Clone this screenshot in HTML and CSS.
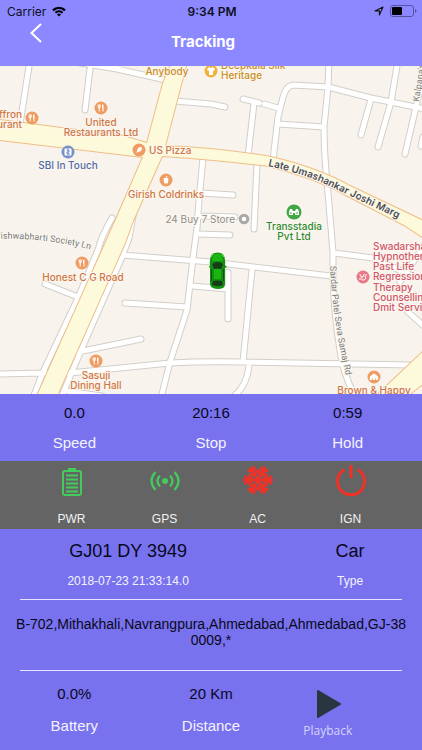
FILE: index.html
```html
<!DOCTYPE html>
<html lang="en">
<head>
<meta charset="utf-8">
<meta name="viewport" content="width=device-width, initial-scale=1">
<title>Tracking</title>
<link rel="stylesheet" href="styles.css">
</head>
<body>
<div class="app">
  <header class="header">
    <div class="status">
      <div class="status-left">
        <span>Carrier</span>
        <svg class="wifi" viewBox="0 0 14 11" width="14" height="11" aria-hidden="true">
          <path d="M0.2 3.6a9.6 9.6 0 0 1 13.6 0L12.2 5.200a7.400 7.400 0 0 0-10.400 0zM2.700 6.100a6.100 6.100 0 0 1 8.600 0L9.800 7.600a4 4 0 0 0-5.600 0zM5 8.400a2.800 2.800 0 0 1 4 0L7 10.400z"/>
        </svg>
      </div>
      <span class="clock">9:34 PM</span>
      <div class="status-right">
        <svg viewBox="0 0 10 10" width="10" height="10" aria-hidden="true"><path d="M1 5 9 1 5.400 9V4.900z" fill="none" stroke="#111" stroke-width="1.100" stroke-linejoin="round"/></svg>
        <svg viewBox="0 0 27 12" width="27" height="12" aria-hidden="true"><rect x=".5" y=".5" width="23" height="11" rx="2.500" fill="none" stroke="#5652a0"/><rect x="2" y="2" width="10" height="8" rx="1"/><path d="M25 4v4q1.500-.7 1.500-2T25 4z" fill="#5652a0"/></svg>
      </div>
    </div>
    <nav class="nav">
      <button class="back" type="button" aria-label="Back">
        <svg viewBox="0 0 12 20" width="12" height="20"><path d="M11 1 1.500 10 11 19" fill="none" stroke="#fff" stroke-width="2"/></svg>
      </button>
      <h1 class="title">Tracking</h1>
    </nav>
  </header>

  <main class="map">
    <svg class="map-canvas" viewBox="0 66 422 328" preserveAspectRatio="xMidYMid slice" role="img" aria-label="Map">
      <defs>
        <g id="roads">
          <path d="M30 60 20 124M74 62 117 69 166 80M90 69 85 110M117 60V69M175 101 211 104 225 107M203 158 199 200 197 228 193 258 187 310 170 362 161 398M202 193 233 195M200 216 235 217"/>
          <path d="M329 60 328 87 324 127Q324 155 328 193L333 252V275Q334 315 340 350 343 374 355 396M273 160 278 117 283 97Q286 86 293 85L328 87 371 98 425 109M243 99 259 103M264 104 278 108M254 103 248 156M278 124 324 127M371 99 361 135M398 60 391 102 378 147M424 72 416 107 405 154M423 137 421 146M257 164 254 229"/>
          <path d="M198 234 230 235M122 255 211 262 331 276M45 284 78 297M112 218Q101 237 98 250L78 298 43 372 33 398M133 216 129 238 122 257 82 348 61 398M125 303 187 307M78 352 141 339M-3 374 43 373 70 373 170 363Q205 361 244 362L411 365M192 286 228 289M228 272V319M252 270 243 362M249 365Q247 386 234 396M334 253 373 258 410 275M400 282 425 244M408 312 425 327M67 391 102 396"/>
        </g>
        <g id="fork">
          <circle r="6.500" fill="#ef9c62"/>
          <path d="M-2.800-3.500V-1q0 1 1 1V3.500M-.8-3.500V-1q0 1-1 1V-3.500M2-3.500V3.500M1.500-3V.5" fill="none" stroke="#fff" stroke-width="1"/>
        </g>
        <path id="marg" d="M268 166Q304 174 325 184T412 225"/>
        <path id="samaj" d="M330 266Q333 326 348 384"/>
        <path id="society" d="M-5 239Q48 237 100 252"/>
        <path id="kalpana" d="M419 102 427 50"/>
      </defs>
      <rect x="-400" y="-400" width="1400" height="1400" fill="#f8f4ed"/>
      <use href="#roads" class="casing"/>
      <use href="#roads" class="road"/>
      <g class="highway">
        <path class="edge" d="M0 120 123 136Q137 140 147 143M0 140 143 157M172 62 163 83 147 143M143 157 117 217 36 398M187 62 165 146Q218 148 271 157 318 168 350 186L430 224M162 156Q222 160 268 166 315 178 342 193L404 225 430 242M162 156 133 221 125 243 58 393M430 345 378 394M410 394 430 378"/>
        <path d="M0 120 123 136Q137 140 147 143L143 157 0 140zM172 62H187L165 146Q218 148 271 157 318 168 350 186L430 224V242L404 225 342 193Q315 178 268 166 222 160 162 156L133 221 125 243 56 398H36L117 217 143 157 147 143 163 83zM430 345 374 398H405L430 378z"/>
      </g>

      <g class="markers">
        <use href="#fork" x="32" y="118"/>
        <use href="#fork" x="101" y="108"/>
        <use href="#fork" x="82" y="263"/>
        <use href="#fork" x="96" y="361"/>
        <g transform="translate(139 150)"><circle r="6.500" fill="#ef9c62"/><path d="M-3.500 3.500-1.500-2Q0-4 3-3.500 4 0 2 1.500zM-1 1h.1M1-1h.1" fill="#fff" stroke="#ef9c62"/></g>
        <g transform="translate(166 180)"><circle r="6.500" fill="#ef9c62"/><path d="M-2-1.500h4L1.500 3h-3z" fill="#fff" stroke="#fff"/><path d="M0-2 1-4" stroke="#fff"/></g>
        <g transform="translate(68 152)"><circle r="6.500" fill="#7590ca"/><rect x="-3.500" y="-3.500" width="7" height="7" rx="1" fill="#fff"/><path d="M-1.500-2H1V0H-1V2H2M0-3V3" fill="none" stroke="#7590ca"/></g>
        <g transform="translate(211 71)"><circle r="6.500" fill="#efb23b"/><path d="M-4-2-1.500-4Q0-2 1.500-4L4-2 3 0 2-.5V4H-2V-.5L-3 0z" fill="#fff"/></g>
        <g transform="translate(294 212)"><circle r="7.500" fill="#3fa744"/><path d="M-5 0-4-3h2l1 2h2L2-3h2L5 0V3H1V1H-1V3H-5z" fill="#fff"/><path d="M-4 1h2M2 1h2" stroke="#3fa744"/></g>
        <g transform="translate(363 277)"><circle r="6.500" fill="#e87886"/><path d="M-3-3Q-3 0-1 0T1-3M-1 0Q-2 4 1 3T2-1M-4 2H-2M3-3v2" fill="none" stroke="#fff"/></g>
        <g transform="translate(374 377)"><circle r="6.500" fill="#ef9c62"/><path d="M-4 3Q-5-1-2-2 0-5 2-2 5-1 4 3H2L1 0V3H-1V0L-2 3z" fill="#fff"/></g>
        <circle cx="244" cy="219" r="3.800" fill="#fff" stroke="#aaa8a5" stroke-width="3"/>
      </g>

      <g class="labels food">
        <text x="22" y="118" class="end">Saffron</text><text x="22" y="128" class="end">Restaurant</text>
        <text x="101" y="126">United</text><text x="101" y="136">Restaurants Ltd</text>
        <text x="149" y="154" class="start">US Pizza</text>
        <text x="166" y="198">Girish Coldrinks</text>
        <text x="83" y="281">Honest C G Road</text>
        <text x="96" y="379">Sasuji</text><text x="96" y="389">Dining Hall</text>
        <text x="374" y="394">Brown &amp; Happy</text>
      </g>
      <g class="labels shop"><text x="167" y="75">Anybody</text><text x="221" y="69" class="start">Deepkala Silk</text><text x="221" y="79" class="start">Heritage</text></g>
      <g class="labels bank"><text x="68" y="169">SBI In Touch</text></g>
      <g class="labels park"><text x="294" y="230">Transstadia</text><text x="294" y="240">Pvt Ltd</text></g>
      <g class="labels store"><text x="235" y="223" class="end">24 Buy 7 Store</text></g>
      <g class="labels health">
        <text x="373" y="250" class="start">Swadarshan</text><text x="373" y="260" class="start">Hypnotherapy</text><text x="373" y="270" class="start">Past Life</text><text x="373" y="280" class="start">Regression</text><text x="373" y="291" class="start">Therapy</text><text x="373" y="301" class="start">Counselling</text><text x="373" y="311" class="start">Dmit Services</text>
      </g>
      <g class="labels street">
        <text class="start major"><textPath href="#marg">Late Umashankar Joshi Marg</textPath></text>
        <text class="start"><textPath href="#samaj">Sardar Patel Seva Samaj Rd</textPath></text>
        <text class="start"><textPath href="#society">Vishwabharti Society Ln</textPath></text>
        <text class="start"><textPath href="#kalpana">Kalpana's</textPath></text>
      </g>

      <g transform="translate(209 252)">
        <path d="M3 2Q9-1 14 2 17 6 16 13L18 15 16 16V31Q16 35 14 36 9 38 4 36 1 35 1 31V16L0 15 1 13Q0 6 3 2z" fill="#129010"/>
        <path d="M4 3Q9 0 13 3L14 9H3zM5 17H12V27H5z" fill="#1cb412"/>
        <path d="M3 12Q9 8 14 12L12 17Q9 16 5 17zM4 29Q9 28 13 29L14 33Q9 35 3 33z" fill="#173c18"/>
        <path d="M2.500 17V29M14.500 17V29" stroke="#17501a"/>
        <path d="M2 5 4 2M15 5 13 2" stroke="#8ae172"/>
      </g>
    </svg>
  </main>

  <section class="stats columns">
    <div class="stat"><span class="value">0.0</span><span class="label">Speed</span></div>
    <div class="stat"><span class="value">20:16</span><span class="label">Stop</span></div>
    <div class="stat"><span class="value">0:59</span><span class="label">Hold</span></div>
  </section>

  <section class="sensors">
    <div class="sensor on">
      <svg viewBox="0 0 30 30" width="30" height="30" aria-hidden="true"><path d="M8 4h14q2 0 2 2V26q0 2-2 2H8q-2 0-2-2V6q0-2 2-2z" fill="none" stroke="currentColor" stroke-width="2"/><path d="M11 1h8v3h-8z" fill="currentColor"/><path d="M9 8.500h12M9 12.500h12M9 16.500h12M9 20.500h12M9 24.500h12" stroke="currentColor" stroke-width="2"/></svg>
      <span>PWR</span>
    </div>
    <div class="sensor on">
      <svg viewBox="0 0 30 30" width="30" height="30" aria-hidden="true"><circle cx="15" cy="14" r="3" fill="currentColor"/><path d="M10 8.500q-5 5.500 0 11M20 8.500q5 5.500 0 11M5.500 5q-8 9 0 18M24.500 5q8 9 0 18" fill="none" stroke="currentColor" stroke-width="2.200"/></svg>
      <span>GPS</span>
    </div>
    <div class="sensor off">
      <svg viewBox="0 0 30 30" width="30" height="30" aria-hidden="true">
        <defs><path id="arm" d="M15 13V-2M11 -.5 15 3.500 19 -.5M10.500 3.500 15 8 19.500 3.500" fill="none" stroke="currentColor" stroke-width="2.500"/></defs>
        <g transform="rotate(30 15 13)"><use href="#arm"/><use href="#arm" transform="rotate(60 15 13)"/><use href="#arm" transform="rotate(120 15 13)"/><use href="#arm" transform="rotate(180 15 13)"/><use href="#arm" transform="rotate(240 15 13)"/><use href="#arm" transform="rotate(300 15 13)"/></g>
      </svg>
      <span>AC</span>
    </div>
    <div class="sensor off power">
      <svg viewBox="0 0 30 30" width="30" height="30" aria-hidden="true"><path d="M8.500 2.500a13.500 13.500 0 1 0 13 0M15-2V11" fill="none" stroke="currentColor" stroke-width="3"/></svg>
      <span>IGN</span>
    </div>
  </section>

  <section class="details">
    <div class="vehicle">
      <div class="stat"><span class="plate">GJ01 DY 3949</span><span class="small">2018-07-23 21:33:14.0</span></div>
      <div class="stat"><span class="plate">Car</span><span class="small">Type</span></div>
    </div>
    <p class="address">B-702,Mithakhali,Navrangpura,Ahmedabad,Ahmedabad,GJ-380009,*</p>
    <div class="columns summary">
      <div class="stat"><span class="value">0.0%</span><span class="label">Battery</span></div>
      <div class="stat"><span class="value">20 Km</span><span class="label">Distance</span></div>
      <button class="playback" type="button">
        <svg viewBox="0 0 26 28" width="26" height="28" aria-hidden="true"><path d="M3 1 25 14 3 27z" fill="#293541" stroke="#293541" stroke-width="2" stroke-linejoin="round"/></svg>
        <span>Playback</span>
      </button>
    </div>
  </section>
</div>
</body>
</html>
```
FILE: styles.css
```css
* { box-sizing: border-box; }

body {
  margin: 0;
  font-family: "Liberation Sans", Arial, sans-serif;
  color: #08081c;
  background: #7872ee;
}

button {
  padding: 0;
  border: 0;
  background: none;
  font: inherit;
  cursor: pointer;
}

svg { display: block; overflow: visible; }

.app {
  display: flex;
  flex-direction: column;
  min-height: 100vh;
}

.header {
  height: 66px;
  background: #8c88ff;
  font-family: Inter, sans-serif;
}

.status {
  display: grid;
  grid-template-columns: 1fr auto 1fr;
  align-items: center;
  height: 22px;
  padding: 0 5px 0 7px;
  font-size: 12px;
  color: #10101c;
}

.status-left, .status-right {
  display: flex;
  align-items: center;
  gap: 6px;
}

.status-right { justify-content: flex-end; }

.clock { font-weight: 600; }

.nav {
  display: grid;
  grid-template-columns: 1fr auto 1fr;
  height: 40px;
  margin-right: 16px;
}

.back {
  justify-self: start;
  align-self: start;
  padding: 1px 30px;
}

.title {
  margin: 0;
  align-self: center;
  font-size: 15px;
  line-height: 20px;
  font-weight: 700;
  color: #fff;
}

.map {
  display: flex;
  flex: 1 0 328px;
  overflow: hidden;
  background: #f8f4ed;
}

.map-canvas {
  flex: 1;
  width: 100%;
  height: auto;
  overflow: hidden;
}

.casing, .road {
  fill: none;
  stroke-linecap: round;
  stroke-linejoin: round;
}

.casing { stroke: #d2cfca; stroke-width: 7px; }
.road { stroke: #fff; stroke-width: 5px; }

.highway { fill: #fcfadb; }
.highway .edge { fill: none; stroke: #f0bd86; stroke-width: 2px; }

.labels {
  font-family: Inter, sans-serif;
  font-size: 10px;
  font-weight: 500;
  text-anchor: middle;
  stroke: #fbf7ef;
  stroke-width: 2px;
  stroke-linejoin: round;
  paint-order: stroke;
}

.labels .start { text-anchor: start; }
.labels .end { text-anchor: end; }

.food { fill: #cf7645; }
.shop { fill: #c98e25; }
.bank { fill: #5268aa; }
.park { fill: #2f8b32; }
.store { fill: #908e8c; font-weight: 400; }
.health { fill: #d0566a; }
.street { fill: #77777a; font-family: Roboto, sans-serif; font-size: 9px; font-weight: 400; }
.street .major { fill: #4c4c50; font-family: Inter, sans-serif; font-size: 10px; font-weight: 600; }

.columns {
  display: grid;
  grid-template-columns: repeat(3, 1fr);
  padding: 0 6px;
}

.stat {
  display: flex;
  flex-direction: column;
  align-items: center;
}

.stats { padding-top: 9px; padding-bottom: 8px; }
.stats .stat { gap: 10px; }
.summary .stat { gap: 12px; }

.value { font-size: 15px; line-height: 20px; }
.label { font-size: 15px; line-height: 20px; color: #f4f3ff; }

.sensors {
  display: grid;
  grid-template-columns: repeat(4, 1fr);
  padding: 6px 25px 2px;
  background: #646464;
  color: #f2f2f2;
  font-size: 12px;
  line-height: 16px;
}

.sensor {
  display: flex;
  flex-direction: column;
  align-items: center;
  gap: 14px;
}

.on svg { color: #43cb5b; }
.off svg { color: #f23126; }

.details { padding-bottom: 11px; }

.vehicle {
  display: grid;
  grid-template-columns: 11fr 5fr;
  gap: 72px;
  margin: 0 20px;
  padding: 10px 5px;
  border-bottom: 1px solid #e5e3ff;
}

.vehicle .stat { gap: 10px; }
.plate { font-size: 18px; line-height: 24px; }
.small { font-size: 12px; line-height: 16px; color: #f4f3ff; }

.address {
  margin: 0;
  padding: 16px 14px 22px;
  font-size: 14px;
  line-height: 16px;
  text-align: center;
  word-break: break-all;
}

.summary { position: relative; padding-top: 14px; }

.summary::before {
  content: "";
  position: absolute;
  top: 0;
  left: 20px;
  right: 20px;
  height: 1px;
  background: #e5e3ff;
}

.playback {
  display: flex;
  flex-direction: column;
  align-items: center;
  justify-self: start;
  gap: 5px;
  padding: 6px 24px 0;
  font-family: "Open Sans", sans-serif;
  font-size: 12px;
  line-height: 16px;
  color: #d6d4fb;
}
```
